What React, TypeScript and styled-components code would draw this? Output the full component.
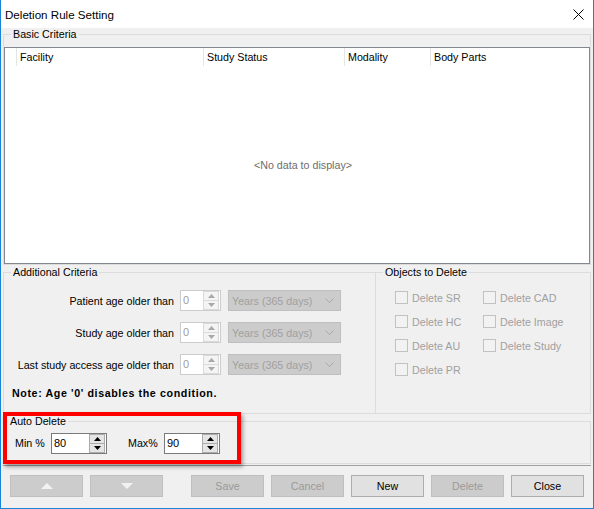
import React from 'react';
import styled, { createGlobalStyle } from 'styled-components';

const GlobalStyle = createGlobalStyle`
  * { box-sizing: border-box; }
  html, body { margin: 0; padding: 0; background: #fff; }
  body {
    font-family: 'Liberation Sans', Arial, sans-serif;
    font-size: 10.7px;
    color: #000;
  }
`;

const Window = styled.div`
  position: relative;
  width: 594px;
  height: 509px;
  display: flex;
  flex-direction: column;
  background: #f0f0f0;
  border-left: 1px solid #1883d7;
  border-right: 1px solid #1883d7;
  border-bottom: 1px solid #1883d7;
`;

const TitleBar = styled.div`
  flex: none;
  height: 28px;
  background: #fff;
  display: flex;
  align-items: center;
  justify-content: space-between;
  padding: 0 9px 0 4px;
`;

const Title = styled.span`
  font-size: 11.6px;
  color: #000;
`;

const Body = styled.div`
  flex: 1;
  display: flex;
  flex-direction: column;
  padding: 0 2px;
`;

const GroupBox = styled.fieldset<{ $height?: number; $gap?: number }>`
  margin: ${(p) => p.$gap ?? 0}px 0 0 0;
  padding: 0;
  border: 1px solid #dcdcdc;
  min-width: 0;
  height: ${(p) => (p.$height ? `${p.$height}px` : 'auto')};
`;

const Legend = styled.legend<{ $indent?: number }>`
  margin-left: ${(p) => p.$indent ?? 7}px;
  padding: 0 2px;
  line-height: 13px;
  font-size: 10.7px;
`;

const BasicBox = styled(GroupBox)`
  padding-top: 6px;
`;

const DataGrid = styled.div`
  height: 217px;
  background: #fff;
  border: 1px solid #828790;
  display: flex;
  flex-direction: column;
`;

const HeaderRow = styled.div`
  flex: none;
  height: 18px;
  display: flex;
`;

const HeaderCell = styled.div<{ $width?: number }>`
  ${(p) => (p.$width ? `width: ${p.$width}px;` : 'flex: 1;')}
  flex-shrink: 0;
  padding-left: 3px;
  line-height: 18px;
  border-right: ${(p) => (p.$width ? '1px solid #e5e5e5' : 'none')};
  white-space: nowrap;
`;

const EmptyGrid = styled.div`
  flex: 1;
  display: flex;
  align-items: center;
  justify-content: center;
  padding-left: 12px;
  color: #6d6d6d;
`;

const CriteriaRow = styled.div`
  display: flex;
  margin-top: 1px;
`;

const AdditionalBox = styled(GroupBox)`
  width: 373px;
  flex: none;
  padding-top: 11px;
  display: flex;
  flex-direction: column;
  gap: 11px;
`;

const ObjectsBox = styled(GroupBox)`
  flex: 1;
  margin-left: -1px;
  padding-top: 10px;
`;

const FieldRow = styled.div`
  display: flex;
  align-items: center;
  height: 21px;
`;

const FieldLabel = styled.span`
  width: 170px;
  text-align: right;
  margin-right: 6px;
  white-space: nowrap;
`;

const Note = styled.div`
  margin-top: 1px;
  padding-left: 8px;
  font-weight: bold;
  letter-spacing: 0.6px;
  line-height: 13px;
`;

const SpinBox = styled.div<{ $width: number; $disabled?: boolean }>`
  width: ${(p) => p.$width}px;
  height: 21px;
  flex: none;
  display: flex;
  background: #fff;
  border: 1px solid ${(p) => (p.$disabled ? '#cccccc' : '#7a7a7a')};
  padding: 0 1px 0 0;
`;

const SpinValue = styled.span<{ $disabled?: boolean }>`
  flex: 1;
  padding-left: 2px;
  line-height: 19px;
  font-size: 11px;
  color: ${(p) => (p.$disabled ? '#a0a0a0' : '#000')};
`;

const SpinButtons = styled.div`
  width: 16px;
  display: flex;
  flex-direction: column;
`;

const SpinButton = styled.div<{ $disabled?: boolean }>`
  flex: 1;
  display: flex;
  align-items: center;
  justify-content: center;
  background: ${(p) => (p.$disabled ? '#f4f4f4' : '#e5e5e5')};
  border: 1px solid ${(p) => (p.$disabled ? '#dadada' : '#acacac')};
  & + & {
    border-top: none;
  }
`;

const Combo = styled.div`
  width: 113px;
  height: 21px;
  flex: none;
  margin-left: 7px;
  display: flex;
  align-items: center;
  justify-content: space-between;
  padding: 0 6px 0 3px;
  background: #cccccc;
  border: 1px solid #bfbfbf;
  color: #a0a0a0;
  white-space: nowrap;
`;

const CheckGrid = styled.div`
  display: grid;
  grid-template-columns: 88px auto;
  row-gap: 7px;
  margin-left: 19px;
`;

const CheckItem = styled.label`
  display: flex;
  align-items: center;
  gap: 4px;
  height: 17px;
  color: #a0a0a0;
  white-space: nowrap;
`;

const CheckBox = styled.span`
  width: 13px;
  height: 13px;
  flex: none;
  background: #f2f2f2;
  border: 1px solid #c2c2c2;
`;

const AutoBox = styled(GroupBox)`
  padding-top: 5px;
`;

const AutoRow = styled.div`
  display: flex;
  align-items: flex-start;
  padding-left: 11px;
`;

const AutoLabel = styled.span<{ $lead?: number }>`
  width: 36px;
  margin-left: ${(p) => p.$lead ?? 0}px;
  line-height: 21px;
  white-space: nowrap;
`;

const Separator = styled.div`
  height: 1px;
  margin-top: 1px;
  background: #a0a0a0;
`;

const ButtonBar = styled.div`
  display: flex;
  gap: 7px;
  padding: 9px 0 0 7px;
`;

const Button = styled.button<{ $lead?: number }>`
  width: 73px;
  height: 22px;
  margin-left: ${(p) => p.$lead ?? 0}px;
  padding: 0;
  display: flex;
  align-items: center;
  justify-content: center;
  font-family: inherit;
  font-size: 10.7px;
  color: #000;
  background: #e1e1e1;
  border: 1px solid #adadad;
  &:disabled {
    color: #9a9a9a;
    background: #cccccc;
    border-color: #bfbfbf;
  }
`;

const Highlight = styled.div`
  position: absolute;
  left: 2px;
  top: 412px;
  width: 238px;
  height: 52px;
  border: 4px solid #ff0000;
  box-shadow: 2px 3px 4px rgba(0, 0, 0, 0.35);
  pointer-events: none;
`;

const Triangle = ({ up, color }: { up?: boolean; color: string }) => (
  <svg width="7" height="4" viewBox="0 0 7 4">
    <polygon points={up ? '0,4 7,4 3.5,0' : '0,0 7,0 3.5,4'} fill={color} />
  </svg>
);

const Spin = ({ value, width, disabled }: { value: string; width: number; disabled?: boolean }) => (
  <SpinBox $width={width} $disabled={disabled}>
    <SpinValue $disabled={disabled}>{value}</SpinValue>
    <SpinButtons>
      <SpinButton $disabled={disabled}>
        <Triangle up color={disabled ? '#a8a8a8' : '#000'} />
      </SpinButton>
      <SpinButton $disabled={disabled}>
        <Triangle color={disabled ? '#a8a8a8' : '#000'} />
      </SpinButton>
    </SpinButtons>
  </SpinBox>
);

const AgeField = ({ label }: { label: string }) => (
  <FieldRow>
    <FieldLabel>{label}</FieldLabel>
    <Spin value="0" width={41} disabled />
    <Combo>
      <span>Years (365 days)</span>
      <svg width="9" height="5" viewBox="0 0 9 5">
        <polyline points="0.5,0.5 4.5,4.5 8.5,0.5" fill="none" stroke="#a8a8a8" strokeWidth="1" />
      </svg>
    </Combo>
  </FieldRow>
);

const objects = ['Delete SR', 'Delete CAD', 'Delete HC', 'Delete Image', 'Delete AU', 'Delete Study', 'Delete PR'];

const App = () => {
  return (
    <>
      <GlobalStyle />
      <Window>
        <TitleBar>
          <Title>Deletion Rule Setting</Title>
          <svg width="11" height="11" viewBox="0 0 11 11">
            <path d="M0.5 0.5 L10.5 10.5 M10.5 0.5 L0.5 10.5" stroke="#000" strokeWidth="1" />
          </svg>
        </TitleBar>
        <Body>
          <BasicBox $height={237}>
            <Legend>Basic Criteria</Legend>
            <DataGrid>
              <HeaderRow>
                <HeaderCell $width={12} />
                <HeaderCell $width={187}>Facility</HeaderCell>
                <HeaderCell $width={141}>Study Status</HeaderCell>
                <HeaderCell $width={86}>Modality</HeaderCell>
                <HeaderCell>Body Parts</HeaderCell>
              </HeaderRow>
              <EmptyGrid>&lt;No data to display&gt;</EmptyGrid>
            </DataGrid>
          </BasicBox>

          <CriteriaRow>
            <AdditionalBox $height={148}>
              <Legend>Additional Criteria</Legend>
              <AgeField label="Patient age older than" />
              <AgeField label="Study age older than" />
              <AgeField label="Last study access age older than" />
              <Note>Note: Age '0' disables the condition.</Note>
            </AdditionalBox>
            <ObjectsBox $height={148}>
              <Legend>Objects to Delete</Legend>
              <CheckGrid>
                {objects.map((name) => (
                  <CheckItem key={name}>
                    <CheckBox />
                    {name}
                  </CheckItem>
                ))}
              </CheckGrid>
            </ObjectsBox>
          </CriteriaRow>

          <AutoBox $height={49} $gap={1}>
            <Legend $indent={4}>Auto Delete</Legend>
            <AutoRow>
              <AutoLabel>Min %</AutoLabel>
              <Spin value="80" width={56} />
              <AutoLabel $lead={21}>Max%</AutoLabel>
              <Spin value="90" width={56} />
            </AutoRow>
          </AutoBox>

          <Separator />

          <ButtonBar>
            <Button disabled>
              <svg width="12" height="6" viewBox="0 0 12 6">
                <polygon points="0,6 12,6 6,0" fill="#f2f2f2" />
              </svg>
            </Button>
            <Button disabled>
              <svg width="12" height="6" viewBox="0 0 12 6">
                <polygon points="0,0 12,0 6,6" fill="#f2f2f2" />
              </svg>
            </Button>
            <Button disabled $lead={21}>Save</Button>
            <Button disabled>Cancel</Button>
            <Button>New</Button>
            <Button disabled>Delete</Button>
            <Button>Close</Button>
          </ButtonBar>
        </Body>
        <Highlight />
      </Window>
    </>
  );
};

export default App;
